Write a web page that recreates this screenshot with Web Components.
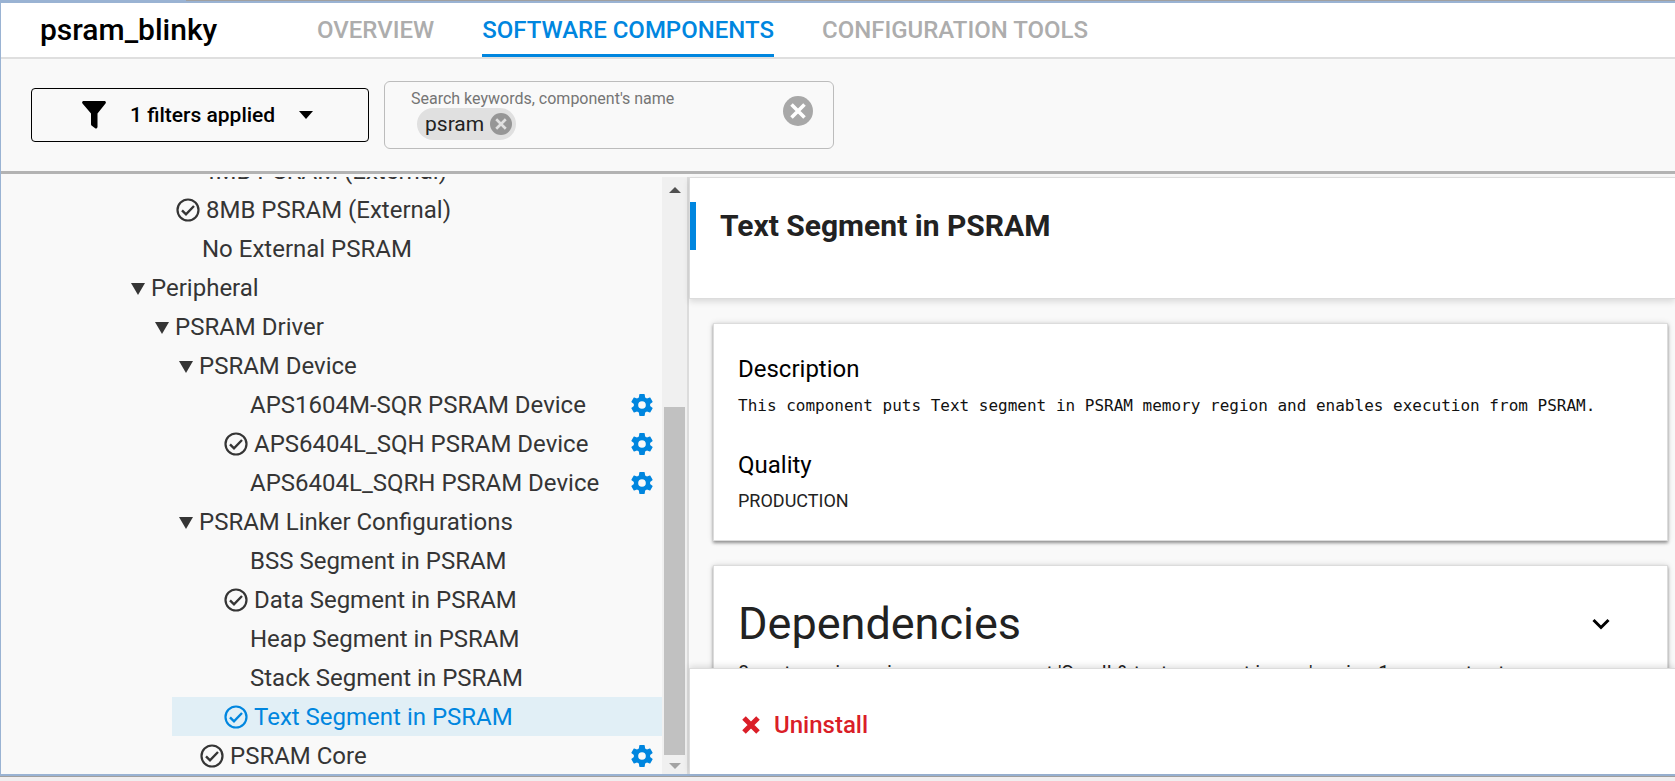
<!DOCTYPE html>
<html lang="en">
<head>
<meta charset="utf-8">
<title>psram_blinky</title>
<style>
  html, body { margin: 0; height: 100%; }
  body { font-family: Roboto, sans-serif; background: #f0eeef; color: #000; }
</style>
</head>
<body>
<project-window></project-window>

<script>
const define = (name, html, setup) => {
  const template = document.createElement('template');
  template.innerHTML = '<style>*{box-sizing:border-box}button{font:inherit;color:inherit;background:none;border:0;padding:0;cursor:pointer}svg{display:block;flex:none}</style>' + html;
  customElements.define(name, class extends HTMLElement {
    constructor() {
      super();
      this.attachShadow({ mode: 'open' }).append(template.content.cloneNode(true));
    }
    connectedCallback() { if (setup) setup(this, this.shadowRoot); }
  });
};

define('project-header', `
<style>
  :host { display: flex; align-items: stretch; height: 56px; background: #fff; border-bottom: 2px solid #dfdfdf; padding-left: 39px; box-sizing: border-box; }
  h1 { margin: 0; width: 277px; font-size: 30px; line-height: 54px; font-weight: 500; }
  nav { display: flex; gap: 48px; }
  a { padding-top: 3px; font-size: 24px; line-height: 48px; font-weight: 500; color: #adadad; text-decoration: none; border-bottom: 3px solid transparent; white-space: nowrap; }
  a[aria-current] { color: #0086df; border-color: #0086df; }
</style>
<h1>psram_blinky</h1>
<nav>
  <a href="#overview">OVERVIEW</a>
  <a href="#components" aria-current="page">SOFTWARE COMPONENTS</a>
  <a href="#tools">CONFIGURATION TOOLS</a>
</nav>`);

define('close-badge', `
<style>
  :host { display: block; flex: none; width: var(--badge-size, 30px); height: var(--badge-size, 30px); }
  button, svg { display: block; width: 100%; height: 100%; }
</style>
<button aria-label="Clear"><svg viewBox="0 0 30 30"><circle cx="15" cy="15" r="15" fill="var(--badge-color, #a8a8a8)"/><path d="M8.500 8.500l13 13M21.500 8.500l-13 13" stroke="var(--badge-cross, #fff)" stroke-width="3.600"/></svg></button>`);

define('search-field', `
<style>
  :host { display: flex; align-items: center; box-sizing: border-box; width: 450px; height: 68px; border: 1px solid #bcbcbc; border-radius: 6px; padding: 0 20px 0 26px; }
  .body { flex: 1; min-width: 0; }
  label { display: block; font-size: 16px; line-height: 18px; color: #757575; }
  .line { display: flex; padding-left: 6px; }
  .chip { display: flex; align-items: center; gap: 6px; height: 32px; padding: 0 4px 0 8px; border-radius: 16px; background: #e0e0e0; font-size: 21px; color: #222; }
  .chip close-badge { --badge-size: 22px; --badge-color: #969696; --badge-cross: #e0e0e0; }
  input { flex: 1; min-width: 0; border: 0; outline: 0; background: none; font: 21px Roboto, sans-serif; }
  .clear { margin-bottom: 8px; }
</style>
<div class="body">
  <label for="q">Search keywords, component's name</label>
  <div class="line"><span class="chip">psram<close-badge></close-badge></span><input id="q" type="text"></div>
</div>
<close-badge class="clear"></close-badge>`);

define('filter-bar', `
<style>
  :host { display: flex; align-items: center; gap: 15px; box-sizing: border-box; height: 115px; padding-left: 30px; border-bottom: 3px solid #b3b3b3; }
  .filter { display: flex; align-items: center; width: 338px; height: 54px; padding-left: 50px; border: 1px solid #000; border-radius: 4px; font-size: 21px; font-weight: 500; }
  .filter span { margin: 0 24px; }
</style>
<button class="filter">
  <svg width="24" height="28" viewBox="0 0 24 28"><path d="M1 0h22q1.500 1 .5 2.500L15.500 12.500V26q-.5 2-2 1.500L9.500 24.500Q9 24 9 23V12.500L.5 2.500Q-.5 1 1 0z"/></svg>
  <span>1 filters applied</span>
  <svg width="14" height="8" viewBox="0 0 14 8"><path d="M0 0h14L7 8z"/></svg>
</button>
<search-field></search-field>`);

define('tree-row', `
<style>
  :host { display: flex; align-items: center; height: 39px; margin-left: calc(27px + 24px * var(--level)); padding-right: 8px; font-size: 24px; line-height: 38px; white-space: nowrap; color: #353535; }
  :host([selected]) { background: #e1eff6; color: #0086df; }
  .mark { display: flex; flex: none; justify-content: flex-end; align-items: center; width: 78px; }
  :host([group]) .mark { width: 27px; padding-right: 6px; }
  .text { flex: 1; }
  svg { display: none; }
  .fold { margin-top: 2px; }
  :host([group]) .fold, :host([checked]) .check, :host([gear]) .gear { display: block; }
  :host([checked]) .mark { width: 82px; padding-right: 6px; }
</style>
<span class="mark">
  <svg class="fold" width="14" height="12" viewBox="0 0 14 12"><path d="M0 0h14L7 12z" fill="currentColor"/></svg>
  <svg class="check" width="24" height="24" viewBox="0 0 24 24" fill="none" stroke="currentColor"><circle cx="12" cy="12" r="10.500" stroke-width="2.200"/><path d="M6 12.300l4 4 8-8.300" stroke-width="2.400"/></svg>
</span>
<span class="text"><slot></slot></span>
<svg class="gear" width="24" height="24" viewBox="1 1 22 22"><path fill="#0086df" d="M19.430 12.980c.04-.32.07-.64.07-.98s-.03-.66-.07-.98l2.110-1.650c.19-.15.24-.42.12-.64l-2-3.460c-.12-.22-.39-.3-.61-.22l-2.490 1c-.52-.4-1.080-.73-1.690-.98l-.38-2.650C14.460 2.180 14.250 2 14 2h-4c-.25 0-.46.18-.49.42l-.38 2.650c-.61.25-1.170.59-1.690.98l-2.490-1c-.23-.09-.49 0-.61.22l-2 3.460c-.13.22-.07.49.12.64l2.110 1.650c-.04.32-.07.65-.07.98s.03.66.07.98l-2.110 1.650c-.19.15-.24.42-.12.64l2 3.460c.12.22.39.3.61.22l2.490-1c.52.4 1.080.73 1.690.98l.38 2.650c.03.24.24.42.49.42h4c.25 0 .46-.18.49-.42l.38-2.650c.61-.25 1.170-.59 1.690-.98l2.490 1c.23.09.49 0 .61-.22l2-3.460c.12-.22.07-.49-.12-.64zM12 15.500a3.500 3.500 0 1 1 0-7 3.500 3.500 0 0 1 0 7z"/></svg>`,
(el) => el.style.setProperty('--level', el.getAttribute('level')));

define('component-tree', `
<style>
  :host { display: flex; width: 688px; flex: none; min-height: 0; border-right: 2px solid #dcdcdc; box-sizing: border-box; }
  .list { flex: 1; min-width: 0; overflow: hidden; }
  .bar { display: flex; flex-direction: column; align-items: center; width: 25px; padding: 10px 2px 5px; gap: 8px; background: #f0f0f0; }
  .track { flex: 1; display: flex; flex-direction: column; align-self: stretch; }
  .gap { flex: 206; }
  .thumb { flex: 348; background: #c1c1c1; }
</style>
<div class="list">
  <tree-row level="4">4MB PSRAM (External)</tree-row>
  <tree-row level="4" checked>8MB PSRAM (External)</tree-row>
  <tree-row level="4">No External PSRAM</tree-row>
  <tree-row group level="4">Peripheral</tree-row>
  <tree-row group level="5">PSRAM Driver</tree-row>
  <tree-row group level="6">PSRAM Device</tree-row>
  <tree-row gear level="6">APS1604M-SQR PSRAM Device</tree-row>
  <tree-row gear checked level="6">APS6404L_SQH PSRAM Device</tree-row>
  <tree-row gear level="6">APS6404L_SQRH PSRAM Device</tree-row>
  <tree-row group level="6">PSRAM Linker Configurations</tree-row>
  <tree-row level="6">BSS Segment in PSRAM</tree-row>
  <tree-row checked level="6">Data Segment in PSRAM</tree-row>
  <tree-row level="6">Heap Segment in PSRAM</tree-row>
  <tree-row level="6">Stack Segment in PSRAM</tree-row>
  <tree-row selected checked level="6">Text Segment in PSRAM</tree-row>
  <tree-row gear checked level="5">PSRAM Core</tree-row>
</div>
<div class="bar">
  <svg width="12" height="6" viewBox="0 0 12 6"><path d="M0 6L6 0l6 6z" fill="#505050"/></svg>
  <div class="track"><div class="gap"></div><div class="thumb"></div></div>
  <svg width="12" height="6" viewBox="0 0 12 6"><path d="M0 0l6 6 6-6z" fill="#a3a3a3"/></svg>
</div>`,
(el, root) => { root.querySelector('.list').scrollTop = 26; });

define('info-card', `
<style>
  :host { display: block; flex: none; background: #fff; border: 1px solid #dcdcdc; padding: 24px; box-shadow: 0 2px 3px rgba(0,0,0,.38), 0 0 6px rgba(0,0,0,.12); }
</style>
<slot></slot>`);

define('component-details', `
<style>
  :host { flex: 1; min-width: 0; display: flex; flex-direction: column; }
  header { position: relative; flex: none; height: 122px; padding-top: 24px; background: #fff; border: 1px solid #dcdcdc; border-right: 0; box-shadow: 0 3px 6px rgba(0,0,0,.12); }
  h2 { margin: 0; border-left: 6px solid #0086df; padding-left: 24px; font-size: 30px; line-height: 48px; font-weight: 700; color: #222; }
  .scroll { flex: 1; min-height: 0; overflow: hidden; display: flex; flex-direction: column; gap: 24px; padding: 24px 7px 0 24px; }
  h3 { margin: 0; font-size: 24px; line-height: 42px; font-weight: 400; }
  p { margin: 0; font-size: 18px; line-height: 30px; color: #222; }
  .mono { font: 16px/32px "DejaVu Sans Mono", monospace; color: #111; margin-bottom: 22px; white-space: nowrap; }
  .head { display: flex; align-items: center; justify-content: space-between; padding-right: 33px; }
  .head h3 { font-size: 45px; line-height: 68px; color: #222; }
  .dep { font-size: 20px; line-height: 30px; white-space: nowrap; }
  footer { position: relative; flex: none; height: 106px; display: flex; align-items: center; padding: 6px 0 0 52px; background: #fff; border: 1px solid #dcdcdc; border-width: 1px 0 0 1px; box-shadow: 0 -2px 6px rgba(0,0,0,.12); }
  footer button { display: flex; align-items: center; gap: 14px; color: #da1e28; font-size: 24px; font-weight: 500; }
</style>
<header><h2>Text Segment in PSRAM</h2></header>
<div class="scroll">
  <info-card>
    <h3>Description</h3>
    <p class="mono">This component puts Text segment in PSRAM memory region and enables execution from PSRAM.</p>
    <h3>Quality</h3>
    <p>PRODUCTION</p>
  </info-card>
  <info-card>
    <div class="head"><h3>Dependencies</h3>
      <button aria-label="Expand"><svg width="18" height="12" viewBox="0 0 18 12"><path d="M1.500 2L9 9.500 16.500 2" fill="none" stroke="#000" stroke-width="3"/></svg></button>
    </div>
    <p class="dep">8 system pieces in use now, current 'Small &amp; text segment in one' region 1 segment set</p>
  </info-card>
</div>
<footer><button><svg width="18" height="18" viewBox="0 0 18 18"><path d="M2 2l14 14M16 2L2 16" stroke="#da1e28" stroke-width="5"/></svg>Uninstall</button></footer>`);

define('project-window', `
<style>
  :host { display: block; height: 100%; box-sizing: border-box; padding: 1px 0 5px; background: linear-gradient(90deg, #9ab3d3 186px, #a0a0a0 186px) 0 0 / 100% 1px no-repeat; }
  .frame { display: flex; flex-direction: column; height: 100%; background: #f9f9f9; border: solid #9ab3d3; border-width: 2px 0 2px 1px; box-shadow: 0 1px #a0a0a0; clip-path: inset(0 0 -1px 0); }
  main { flex: 1; min-height: 0; display: flex; padding-top: 3px; }
</style>
<div class="frame">
  <project-header></project-header>
  <filter-bar></filter-bar>
  <main><component-tree></component-tree><component-details></component-details></main>
</div>`);
</script>
</body>
</html>
